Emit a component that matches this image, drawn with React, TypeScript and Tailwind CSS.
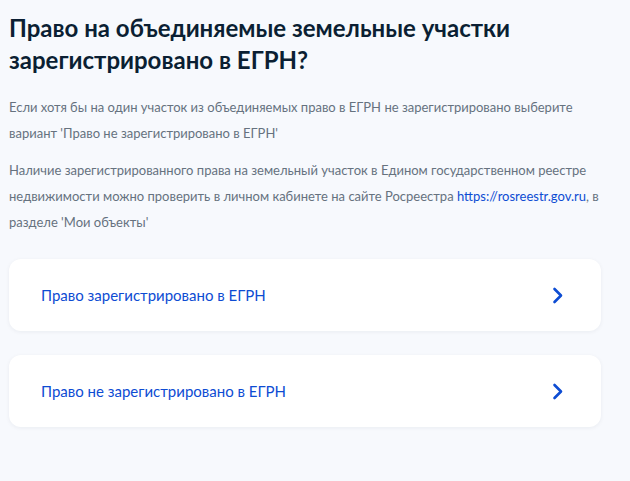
const options = ["Право зарегистрировано в ЕГРН", "Право не зарегистрировано в ЕГРН"];

function Chevron() {
  return (
    <svg width="12" height="17" viewBox="0 0 12 17" fill="none" className="text-[#0d4cd3]">
      <path d="M2.5 2l6.5 6.5-6.5 6.5" stroke="currentColor" strokeWidth="2.6" strokeLinecap="round" strokeLinejoin="round" />
    </svg>
  );
}

export default function App() {
  return (
    <div className="min-h-[481px] w-[630px] bg-[#f7f9fd] font-['Lato',sans-serif]">
      <div className="w-[601px] pl-[9px] pt-[12px]">
        <h1 className="text-[24px] font-bold leading-[32px] text-[#0b1f33]">
          Право на объединяемые земельные участки зарегистрировано в ЕГРН?
        </h1>

        <div className="mt-[18px] space-y-[11px] text-[13px] leading-[26px] text-[#66727f]">
          <p>
            Если хотя бы на один участок из объединяемых право в ЕГРН не зарегистрировано выберите вариант
            'Право не зарегистрировано в ЕГРН'
          </p>
          <p>
            Наличие зарегистрированного права на земельный участок в Едином государственном реестре недвижимости
            можно проверить в личном кабинете на сайте Росреестра{" "}
            <a className="text-[#0d4cd3]">https://rosreestr.gov.ru</a>, в разделе 'Мои объекты'
          </p>
        </div>

        <div className="mt-[24px] space-y-[24px]">
          {options.map((label) => (
            <button
              key={label}
              className="flex h-[72px] w-full items-center justify-between rounded-[12px] bg-white pl-[32px] pr-[37px] text-left shadow-[0_1px_4px_rgba(11,31,51,0.06)]"
            >
              <span className="text-[15px] text-[#0d4cd3]">{label}</span>
              <Chevron />
            </button>
          ))}
        </div>
      </div>
    </div>
  );
}
